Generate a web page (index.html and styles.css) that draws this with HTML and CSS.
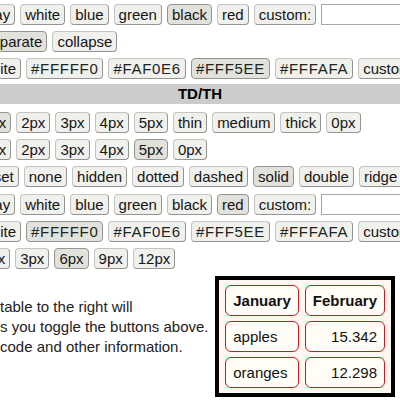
FILE: index.html
```html
<!DOCTYPE html>
<html>
<head>
<meta charset="utf-8">
<link rel="stylesheet" href="styles.css">
</head>
<body>
<div class="page">
  <div class="row r-color">
    <button class="b">gray</button><button class="b">white</button><button class="b">blue</button><button class="b">green</button><button class="b on">black</button><button class="b">red</button><button class="b">custom:</button><input class="inp" type="text">
  </div>
  <div class="row r-sep">
    <button class="b on">separate</button><button class="b">collapse</button>
  </div>
  <div class="row r-bg">
    <button class="b">white</button><button class="b hex">#FFFFF0</button><button class="b hex">#FAF0E6</button><button class="b hex on">#FFF5EE</button><button class="b hex">#FFFAFA</button><button class="b">custom:</button>
  </div>
  <div class="bar">TD/TH</div>
  <div class="row r-px">
    <button class="b on">1px</button><button class="b">2px</button><button class="b">3px</button><button class="b">4px</button><button class="b">5px</button><button class="b">thin</button><button class="b">medium</button><button class="b">thick</button><button class="b">0px</button>
  </div>
  <div class="row r-px">
    <button class="b">1px</button><button class="b">2px</button><button class="b">3px</button><button class="b">4px</button><button class="b on">5px</button><button class="b">0px</button>
  </div>
  <div class="row r-style">
    <button class="b">inset</button><button class="b">none</button><button class="b">hidden</button><button class="b">dotted</button><button class="b">dashed</button><button class="b on">solid</button><button class="b">double</button><button class="b">ridge</button>
  </div>
  <div class="row r-color">
    <button class="b">gray</button><button class="b">white</button><button class="b">blue</button><button class="b">green</button><button class="b">black</button><button class="b on">red</button><button class="b">custom:</button><input class="inp" type="text">
  </div>
  <div class="row r-bg">
    <button class="b">white</button><button class="b hex on">#FFFFF0</button><button class="b hex">#FAF0E6</button><button class="b hex">#FFF5EE</button><button class="b hex">#FFFAFA</button><button class="b">custom:</button>
  </div>
  <div class="row r-rad">
    <button class="b">0px</button><button class="b">3px</button><button class="b on">6px</button><button class="b">9px</button><button class="b">12px</button>
  </div>
  <div class="bottom">
    <p class="note">table to the right will<br>s you toggle the buttons above.<br>code and other information.</p>
    <table class="demo">
      <tr><th>January</th><th>February</th></tr>
      <tr><td>apples</td><td class="num">15.342</td></tr>
      <tr><td>oranges</td><td class="num">12.298</td></tr>
    </table>
  </div>
</div>
</body>
</html>
```
FILE: styles.css
```css
html, body {
  margin: 0;
  padding: 0;
  background: #fff;
}
.page {
  width: 400px;
  height: 400px;
  overflow: hidden;
  padding-top: 4px;
  box-sizing: border-box;
  font-family: "Liberation Sans", Arial, sans-serif;
  font-size: 15px;
  color: #151515;
}
.row {
  display: flex;
  gap: 5px;
  height: 21px;
  margin-bottom: 6.2px;
  white-space: nowrap;
}
.b {
  flex: none;
  font-family: "Liberation Sans", Arial, sans-serif;
  font-size: 15px;
  color: #151515;
  height: 21px;
  line-height: 19px;
  padding: 0 4px;
  margin: 0;
  background: #f0f0ec;
  border: 1px solid #c4c4c0;
  border-right-color: #949490;
  border-bottom-color: #949490;
  border-radius: 4px;
}
.b.hex {
  letter-spacing: 0.7px;
  color: #1c261c;
}
.b.on {
  background: #e2e2dc;
  border-color: #949490;
}
.inp {
  flex: none;
  width: 120px;
  height: 21px;
  box-sizing: border-box;
  margin: 0;
  border: 1px solid #a6a6a6;
  background: #fff;
}
.r-color { margin-left: -24px; }
.r-sep { margin-left: -21px; }
.r-bg { margin-left: -24px; }
.r-px { margin-left: -23px; }
.r-style { margin-left: -23px; }
.r-rad { margin-left: -24px; }
.bar {
  background: #cccccc;
  height: 20px;
  line-height: 20px;
  margin: -2px 0 8.4px;
  text-align: center;
  font-weight: bold;
  color: #000;
}
.bottom {
  display: flex;
  align-items: flex-start;
  justify-content: space-between;
}
.note {
  margin: 22px 0 0 0;
  line-height: 20px;
  color: #222;
}
.demo {
  margin: 1px 5px 0 0;
  border: 4px solid #000;
  background: #fff6f2;
  border-spacing: 6px 5px;
  flex: none;
}
.demo th, .demo td {
  height: 29px;
  padding: 0 7px;
  border: 1px solid #c02020;
  border-radius: 6px;
  background: #fffdf6;
  text-align: left;
  font-size: 15px;
  color: #111;
  white-space: nowrap;
}
.demo th {
  font-weight: bold;
}
.demo td.num {
  text-align: right;
}
```
